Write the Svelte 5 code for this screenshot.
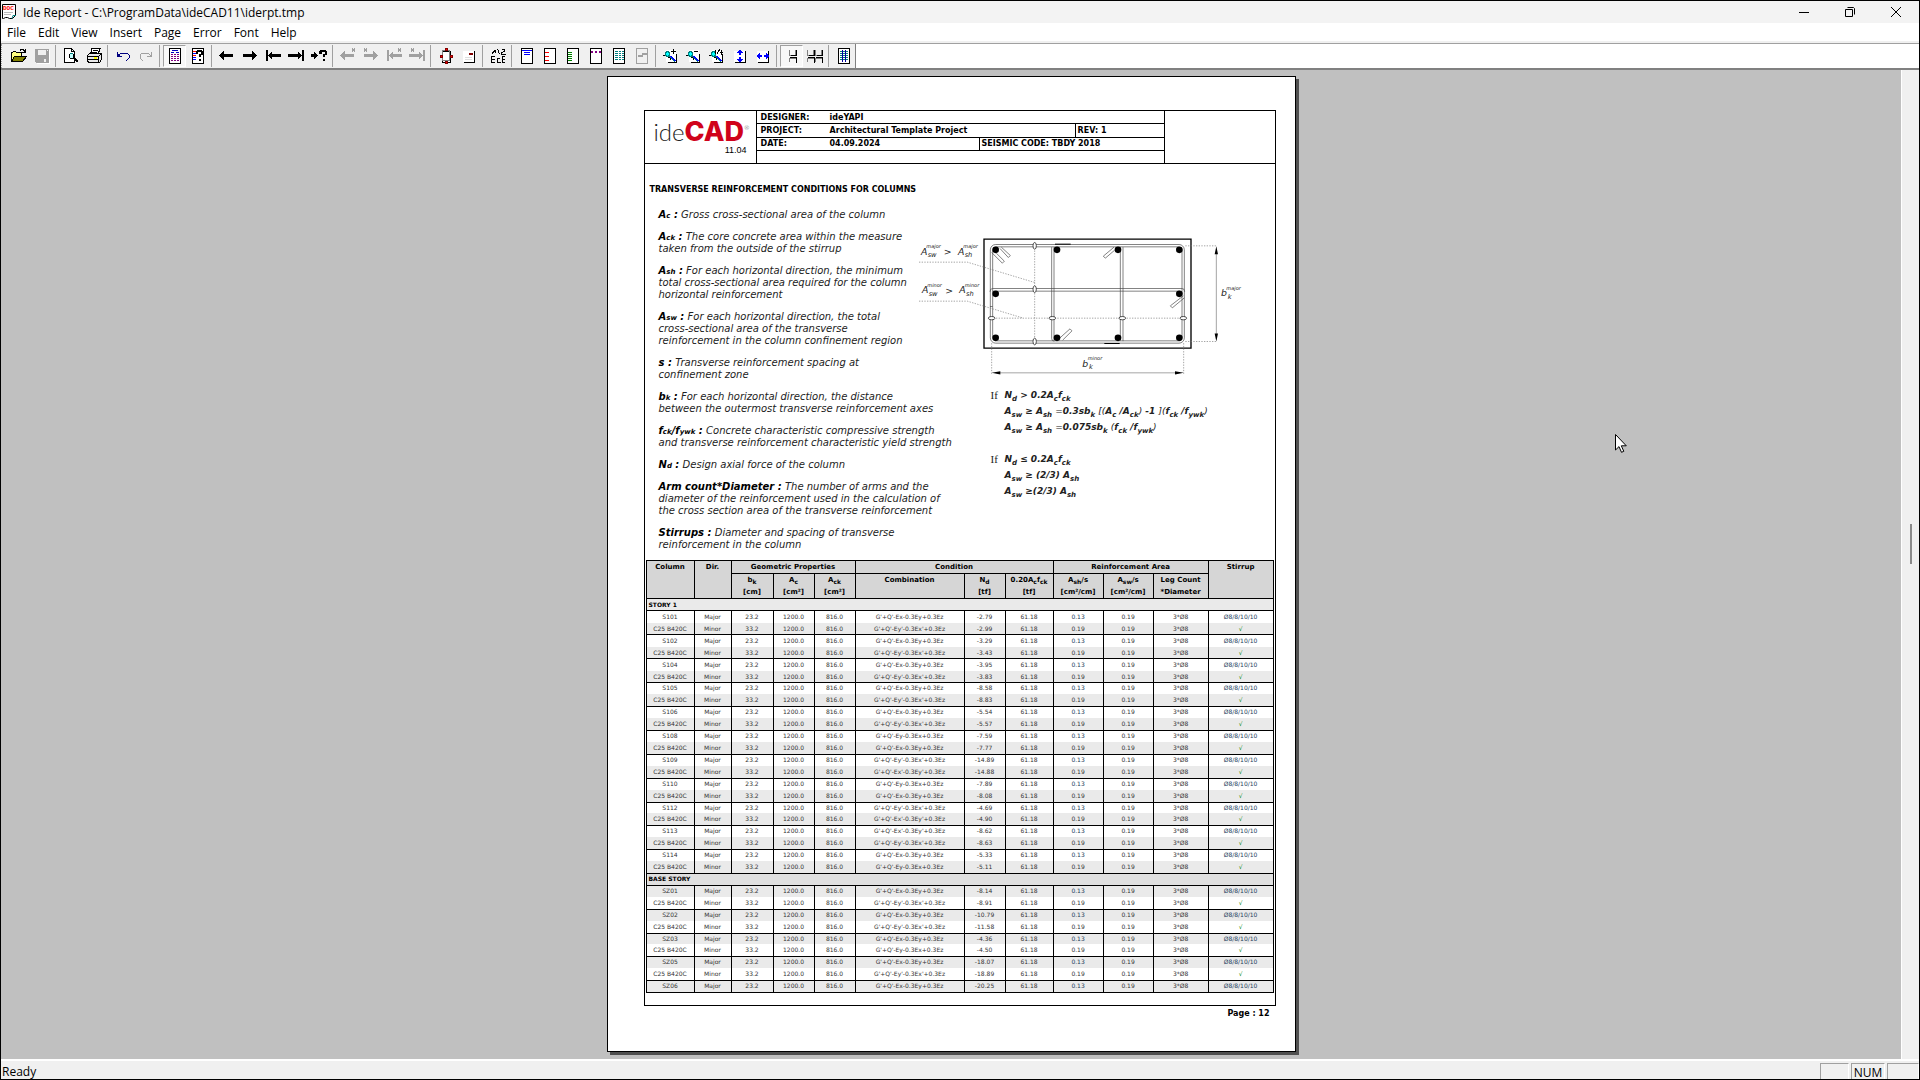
<script>
  const menus = ["File", "Edit", "View", "Insert", "Page", "Error", "Font", "Help"];

  // every icon is a list of [fill, stroke, path] on a 16 x 16 grid
  const pageShape = ["#fff", "#000", "M2.5.5h11v15h-11z"];
  const smallPage = ["#fff", "none", "M2 3h11v11H2z"];
  const smallEdge = ["none", "#000", "M13.5 3v11.5H3"];
  const lens = [
    ["#fff", "none", "M3 2h10v12H3z"],
    ["none", "#000", "M13.5 6v8.5H5"],
    ["#0ff", "#008080", "M2.5 4.5l2-1 2 1v3l-2 1-2-1z"],
    ["none", "#000", "M0 7.5h2M5 9.5h2v2"],
    ["none", "#008080", "M6.5 8.5l6 6"],
    ["none", "#00f", "M7.5 8.5l5 5M8.5 8.5l5 5"],
  ];
  const leftArrow = "M0 7.5L5 3v3h9v3H5v3z";
  const rightArrow = "M15 7.5L10 3v3H1v3h9v3z";
  const leftStop = "M1 2h2v11H1zM3 7.5L7 3v3h9v3H7v3z";
  const rightStop = "M14 2h2v11h-2zM14 7.5L10 3v3H0v3h10v3z";
  const cross = (x) => `M${x} .5l3 3M${x + 3} .5l-3 3`;
  const beam = (x) => [
    ["none", "#808080", `M${x + 0.5} 2v5h6v-5M${x + 0.5} 14v-4h6`],
    ["none", "#000", `M${x + 7.5} 2v5.5h-6M${x + 1} 9.5h6.5v5`],
  ];

  const icons = {
    open: [
      ["#ffff80", "#000", "M.5 13.5v-9h1l1-1h2l1 1h5v4"],
      ["#808000", "#000", "M.5 13.5l3-5h12l-4 5z"],
      ["none", "#000", "M9 2.5l1-1h2l2 2M14.5 1v3.5H11"],
    ],
    save: [
      ["#a0a0a0", "none", "M1 1h14v14H2l-1-1z"],
      ["#f0f0f0", "none", "M4 2h8v5H4zM10 11h2v3h-2zM13 2h1v1h-1z"],
      ["none", "#fff", "M15.5 2v13.5H3"],
    ],
    preview: [
      ["#fff", "#000", "M1.5.5h7l3 3v11h-10z"],
      ["none", "#000", "M8.5.5v3h3"],
      ["#c0ffff", "#000", "M6.5 6.5l1-1h2l1 1v3l-1 1h-2l-1-1z"],
      ["none", "#008080", "M7 5.500h3M11.500 10.500l3 3"],
      ["none", "#000", "M11 9.500l4 4M10.5 10l4 4"],
    ],
    print: [
      ["#fff", "#000", "M4.5 6.5l1.500-6h8l-2 6z"],
      ["none", "#000", "M7 2.500h5M6 4.500h5"],
      ["#e8e8e8", "#000", "M1.5 7.500l2-2h11l1 2v4l-2 3h-11l-1-2z"],
      ["none", "#000", "M1 8.500h11.500v5M12.500 8.500l3-3M2 11.500h10"],
      ["#ff0", "none", "M8 9h3v2H8z"],
    ],
    undo: [
      ["none", "#000080", "M2.5 4v4.500H7M3 8l3-3h6l2 2v3l-2 2h-1"],
      ["#000080", "none", "M2 5l4 4H2z"],
    ],
    redo: [
      ["none", "#a0a0a0", "M13.500 4v4.500H9M13 8l-3-3H4L2 7v3l2 2h1"],
      ["#a0a0a0", "none", "M14 5l-4 4h4z"],
    ],
    report: [
      pageShape,
      ["none", "#0000c0", "M5 2.500h6M4 4.500h3M9 4.500h3"],
      ["none", "#800080", "M4 6.500h2M7 6.500h2M10 6.500h2M4 8.500h2M7 8.500h2M10 8.500h2M4 10.500h2M7 10.500h2M10 10.500h2M4 12.500h2M7 12.500h2M10 12.500h2"],
    ],
    reportHelp: [
      pageShape,
      ["none", "#f00", "M3 3.500h3M3 7.500h3"],
      ["none", "#00f", "M3 5.500h3M3 9.500h3M3 11.500h3"],
      ["#000", "none", "M6 3h1V2h5v1h1v4h-2v2H9V6h2V4H8v2H6zM9 11h2v2H9z"],
    ],
    prev: [["#000", "none", leftArrow]],
    next: [["#000", "none", rightArrow]],
    first: [["#000", "none", leftStop]],
    last: [["#000", "none", rightStop]],
    goto: [
      ["#000", "none", "M0 6h3V4l4 3.500L3 11V9H0z"],
      ["#000", "none", "M8 3h1V2h6v1h1v4h-2v2h-2V6h2V4h-3v2H8zM12 11h2v2h-2z"],
    ],
    prevError: [["#a0a0a0", "none", leftArrow], ["none", "#a0a0a0", cross(12)]],
    nextError: [["#a0a0a0", "none", rightArrow], ["none", "#a0a0a0", cross(1)]],
    firstError: [["#a0a0a0", "none", leftStop], ["none", "#a0a0a0", cross(12)]],
    lastError: [["#a0a0a0", "none", rightStop], ["none", "#a0a0a0", cross(2)]],
    frame: [
      ["#fff", "#000", "M4.500 3.500h8v11h-8z"],
      ["none", "#808080", "M4.500 2.500h7v10h-7z"],
      ["#f00", "#800000", "M7 .5h2v2H7zM2.500 7h2v2h-2zM12.500 7h2v2h-2zM7 13h2v2H7z"],
    ],
    stamp: [smallPage, smallEdge, ["#800000", "none", "M8 5h4v2H8z"], ["none", "#ddd", "M4 9.500h7M4 11.500h7"]],
    label: [
      ["none", "#000", "M1.500 8v7M2 8.500h3M2 11.500h3M2 14.500h3M7.500 10v5M8 10.500h2M8 14.500h3M12.500 8v7M13 8.500h2M13 11.500h2M13 14.500h2"],
      ["none", "#000", "M2 5.500l3-3M5.500 2v3M7.500 1l2 5M11.500 1h3v2l-3 2v1h4"],
    ],
    header: [pageShape, ["none", "#00f", "M3 2.500h10M5 4.500h6M5 6.500h6"]],
    leftRed: [pageShape, ["none", "#f00", "M3 4.500h4M3 8.500h4M3 12.500h4"]],
    leftGreen: [pageShape, ["none", "#008000", "M3 4.500h4M3 6.500h4M3 8.500h4M3 10.500h4M3 12.500h4"]],
    dashed: [pageShape, ["#800080", "none", "M3 3h2v2H3zM7 3h2v2H7zM11 3h2v2h-2z"]],
    lines: [
      pageShape,
      ["none", "#008080", "M4 3.500h3M8 3.500h2M11 3.500h2M4 5.500h3M8 5.500h2M11 5.500h2M4 7.500h3M8 7.500h2M11 7.500h2M4 9.500h3M8 9.500h2M11 9.500h2M4 11.500h3M8 11.500h2M11 11.500h2"],
    ],
    broken: [["#f0f0f0", "#a0a0a0", "M2.500.5h11v15h-11z"], ["#a0a0a0", "none", "M4 7h4V5h5v2H9v2H4z"]],
    zoomIn: [...lens, ["none", "#000", "M8 3.500h5M10.500 1v5"]],
    zoomOut: [...lens, ["none", "#000", "M8 3.500h4"]],
    zoomReal: [...lens, ["none", "#000", "M6.500 2v4M8 6l3-5M12.500 2v5M11 4.500h3"]],
    fitHeight: [smallPage, smallEdge, ["#00f", "none", "M7 2h2v1h1v1h1v1H9v2H7V5H5V4h1V3h1zM7 9h2v2h2v1h-1v1H9v1H7v-1H6v-1H5v-1h2z"]],
    fitWidth: [smallPage, smallEdge, ["#00f", "none", "M2 7h1V6h1V5h1v2h2v2H5v2H4v-1H3V9H2zM14 7h-1V6h-1V5h-1v2H9v2h2v2h1v-1h1V9h1z"]],
    single: [...beam(5)],
    double: [...beam(0), ...beam(8)],
    grid: [
      pageShape,
      ["none", "#008080", "M4 3.500h8M4 5.500h8M4 7.500h8M4 9.500h8M4 11.500h8"],
      ["none", "#0000a0", "M6.500 2v12M9.500 2v12"],
    ],
  };

  const toolbar = [
    [["open", "Open"], ["save", "Save"]],
    [["preview", "Print preview"], ["print", "Print"]],
    [["undo", "Undo"], ["redo", "Redo"]],
    [["report", "Report"], ["reportHelp", "Report help"]],
    [["prev", "Previous page"], ["next", "Next page"], ["first", "First page"], ["last", "Last page"], ["goto", "Go to page"]],
    [["prevError", "Previous error"], ["nextError", "Next error"], ["firstError", "First error"], ["lastError", "Last error"]],
    [["frame", "Frame"], ["stamp", "Stamp"]],
    [["label", "Labels"]],
    [["header", "Header"], ["leftRed", "Chapters"], ["leftGreen", "Sections"], ["dashed", "Page break"], ["lines", "Body"], ["broken", "Line break"]],
    [["zoomIn", "Zoom in"], ["zoomOut", "Zoom out"], ["zoomReal", "Actual size"], ["fitHeight", "Fit height"], ["fitWidth", "Fit width"]],
    [["single", "Single page"], ["double", "Facing pages"]],
    [["grid", "Grid"]],
  ];
  const pressed = ["report", "single"];
  const disabled = ["save", "redo", "prevError", "nextError", "firstError", "lastError", "broken"];

  // [symbol parts (sub when odd), lines of text]
  const terms = [
    [["A", "c"], ["Gross cross-sectional area of the column"]],
    [["A", "ck"], ["The core concrete area within the measure", "taken from the outside of the stirrup"]],
    [["A", "sh"], ["For each horizontal direction, the minimum", "total cross-sectional area required for the column", "horizontal reinforcement"]],
    [["A", "sw"], ["For each horizontal direction, the total", "cross-sectional area of the transverse", "reinforcement in the column confinement region"]],
    [["s"], ["Transverse reinforcement spacing at", "confinement zone"]],
    [["b", "k"], ["For each horizontal direction, the distance", "between the outermost transverse reinforcement axes"]],
    [["f", "ck", "/f", "ywk"], ["Concrete characteristic compressive strength", "and transverse reinforcement characteristic yield strength"]],
    [["N", "d"], ["Design axial force of the column"]],
    [["Arm count*Diameter"], ["The number of arms and the", "diameter of the reinforcement used in the calculation of", "the cross section area of the transverse reinforcement"]],
    [["Stirrups"], ["Diameter and spacing of transverse", "reinforcement in the column"]],
  ];

  const X = "G'+Q'-Ex-0.3Ey+0.3Ez";
  const Y = "G'+Q'-Ey-0.3Ex+0.3Ez";
  const XP = "G'+Q'-Ex'-0.3Ey'+0.3Ez";
  const YP = "G'+Q'-Ey'-0.3Ex'+0.3Ez";

  // [column, major combination, major Nd, minor combination, minor Nd]
  const stories = [
    {
      name: "STORY 1",
      columns: [
        ["S101", X, "-2.79", YP, "-2.99"],
        ["S102", X, "-3.29", YP, "-3.43"],
        ["S104", X, "-3.95", YP, "-3.83"],
        ["S105", X, "-8.58", YP, "-8.83"],
        ["S106", X, "-5.54", YP, "-5.57"],
        ["S108", Y, "-7.59", X, "-7.77"],
        ["S109", YP, "-14.89", XP, "-14.88"],
        ["S110", Y, "-7.89", X, "-8.08"],
        ["S112", YP, "-4.69", XP, "-4.90"],
        ["S113", XP, "-8.62", YP, "-8.63"],
        ["S114", X, "-5.33", Y, "-5.11"],
      ],
    },
    {
      name: "BASE STORY",
      columns: [
        ["SZ01", X, "-8.14", YP, "-8.91"],
        ["SZ02", X, "-10.79", YP, "-11.58"],
        ["SZ03", X, "-4.36", Y, "-4.50"],
        ["SZ05", X, "-18.07", YP, "-18.89"],
        ["SZ06", X, "-20.25"],
      ],
    },
  ];

  const bars = [[287, 90], [471, 90], [654, 90], [838, 90], [287, 222], [838, 222], [287, 354], [471, 354], [654, 354], [838, 354]];
</script>

{#snippet parts(list)}{#each list as p, i}{#if i % 2}<sub>{p}</sub>{:else}{p}{/if}{/each}{/snippet}

{#snippet symbol(x, y, letter, low, high)}
  <text {x} {y} font-size="28">{letter}</text>
  <text x={x + 20} y={y + 8} font-size="20">{low}</text>
  <text x={x + 16} y={y - 20} font-size="15">{high}</text>
{/snippet}

<div class="window">
  <header class="titlebar">
    <svg class="doc" viewBox="0 0 16 16" aria-hidden="true">
      <path d="M.5.5h13v11l-3 3h-3l-2-1h-2l-2 1h-1z" fill="#fff" stroke="#000" />
      <path d="M10 14.500l1-3h3" fill="none" stroke="#008080" />
      <path d="M2 8.500h9M2 10.500h7" stroke="#bbb" />
      <text x="1" y="6" font-size="6" font-weight="bold" fill="#f00">DOC</text>
    </svg>
    <h1>Ide Report - C:\ProgramData\ideCAD11\iderpt.tmp</h1>
    <div class="controls">
      <button aria-label="Minimize"><svg viewBox="0 0 12 12"><path d="M1 6.500h10" /></svg></button>
      <button aria-label="Restore"><svg viewBox="0 0 12 12"><path d="M1.500 3.500h7v7h-7zM3.500 1.500h6l1 1v6" /></svg></button>
      <button aria-label="Close"><svg viewBox="0 0 12 12"><path d="M1 1l10 10M11 1L1 11" /></svg></button>
    </div>
  </header>

  <nav class="menubar">
    {#each menus as menu}<button>{menu}</button>{/each}
  </nav>

  <div class="toolstrip">
    <div class="toolbar">
      {#each toolbar as group}
        <div class="group">
          {#each group as [name, label]}
            <button aria-label={label} class:pressed={pressed.includes(name)} disabled={disabled.includes(name)}>
              <svg viewBox="0 0 16 16" shape-rendering="crispEdges">
                {#each icons[name] as [fill, stroke, d]}<path {fill} {stroke} {d} />{/each}
              </svg>
            </button>
          {/each}
        </div>
      {/each}
    </div>
  </div>

  <main class="workspace">
    <div class="canvas">
      <article class="sheet">
        <div class="frame">
          <div class="head">
            <div class="logo">
              <div class="brand"><span>ide</span><b>CAD</b><sup>®</sup></div>
              <div class="version">11.04</div>
            </div>
            <div class="info">
              <div class="row"><span class="key">DESIGNER:</span><span>ideYAPI</span></div>
              <div class="row"><span class="key">PROJECT:</span><span>Architectural Template Project</span><span class="rev">REV: 1</span></div>
              <div class="row"><span class="key">DATE:</span><span>04.09.2024</span><span class="code">SEISMIC CODE: TBDY 2018</span></div>
              <div class="row"></div>
            </div>
            <div class="blank"></div>
          </div>

          <h2>TRANSVERSE REINFORCEMENT CONDITIONS FOR COLUMNS</h2>

          <div class="conditions">
            <div class="terms">
              {#each terms as [sym, lines]}
                <p>
                  <b>{@render parts(sym)} :</b>
                  {#each lines as line, i}{#if i}<br />{/if}{line}{/each}
                </p>
              {/each}
            </div>

            <div class="figures">
              <svg class="diagram" viewBox="45 40 1020 440">
                <g fill="none" stroke="#000">
                  <path d="M252 58h621v327H252z" stroke-width="4" />
                  <g stroke="#444" stroke-width="2">
                    <rect x="271" y="74" width="582" height="296" rx="16" />
                    <rect x="278" y="81" width="568" height="282" rx="10" />
                    <path d="M278 206h568q8 0 8 10M278 214h560q8 0 8 8M278 206q-8 0-8 10" />
                    <path d="M455 82v274q0 8 8 8M462 82v280M661 82v280M669 82v282" />
                    <path d="M275 98l32 32 6-6-24-24M300 86l25 27 6-6-27-25M642 82l-32 27 6 6 28-24M850 228l-39 30 6 6 36-30M480 354l30-27 6 6-28 28" />
                    <path d="M270 260h8" />
                  </g>
                  <path d="M465 73h47M613 371h46" stroke-width="3" />
                  <g stroke="#777" stroke-width="2" stroke-dasharray="4 4">
                    <path d="M57 127h145l202 61M57 244h145l165 50M404 68v306M264 295h594" />
                    <path d="M856 78h92M856 365h92M275 370v94M851 370v94" />
                  </g>
                  <g fill="#fff" stroke-width="2">
                    <ellipse cx="404" cy="78" rx="5" ry="10" /><ellipse cx="404" cy="208" rx="5" ry="10" />
                    <ellipse cx="404" cy="365" rx="5" ry="10" /><ellipse cx="275" cy="295" rx="10" ry="5" />
                    <ellipse cx="457" cy="295" rx="10" ry="5" /><ellipse cx="667" cy="295" rx="10" ry="5" />
                    <ellipse cx="850" cy="295" rx="10" ry="5" />
                  </g>
                  <path d="M290 459h546M949 95v254" stroke="#777" stroke-width="2" />
                </g>
                <path d="M275 459l26-5v10zM851 459l-26-5v10zM949 79l-5 24h10zM949 365l-5-24h10z" />
                {#each bars as [cx, cy]}<circle {cx} {cy} r="10" />{/each}
                <g font-style="italic" fill="#222">
                  {@render symbol(63, 105, "A", "sw", "major")}
                  <text x="131" y="106" font-size="28">&gt;</text>
                  {@render symbol(174, 105, "A", "sh", "major")}
                  {@render symbol(66, 221, "A", "sw", "minor")}
                  <text x="136" y="222" font-size="28">&gt;</text>
                  {@render symbol(178, 221, "A", "sh", "minor")}
                  {@render symbol(547, 441, "b", "k", "minor")}
                  {@render symbol(963, 230, "b", "k", "major")}
                </g>
              </svg>

              <div class="formulas">
                <span class="if">If</span>
                <div>
                  <p>N<sub>d</sub> &gt; 0.2A<sub>c</sub>f<sub>ck</sub></p>
                  <p>A<sub>sw</sub> ≥ A<sub>sh</sub> <i>=</i>0.3sb<sub>k</sub> <i>[(</i>A<sub>c</sub> /A<sub>ck</sub><i>)</i> -1 <i>](</i>f<sub>ck</sub> /f<sub>ywk</sub><i>)</i></p>
                  <p>A<sub>sw</sub> ≥ A<sub>sh</sub> <i>=</i>0.075sb<sub>k</sub> <i>(</i>f<sub>ck</sub> /f<sub>ywk</sub><i>)</i></p>
                </div>
                <span class="if">If</span>
                <div>
                  <p>N<sub>d</sub> ≤ 0.2A<sub>c</sub>f<sub>ck</sub></p>
                  <p>A<sub>sw</sub> ≥ (2/3) A<sub>sh</sub></p>
                  <p>A<sub>sw</sub> ≥(2/3) A<sub>sh</sub></p>
                </div>
              </div>
            </div>
          </div>

          <table>
            <colgroup>
              {#each [48, 37, 42, 41, 41, 109, 41, 48, 50, 50, 55, 65] as w}<col style="width: {w}px" />{/each}
            </colgroup>
            <thead>
              <tr>
                <th rowspan="2">Column</th>
                <th rowspan="2">Dir.</th>
                <th colspan="3">Geometric Properties</th>
                <th colspan="3">Condition</th>
                <th colspan="3">Reinforcement Area</th>
                <th rowspan="2">Stirrup</th>
              </tr>
              <tr class="units">
                <th>b<sub>k</sub><br />[cm]</th>
                <th>A<sub>c</sub><br />[cm²]</th>
                <th>A<sub>ck</sub><br />[cm²]</th>
                <th>Combination</th>
                <th>N<sub>d</sub><br />[tf]</th>
                <th>0.20A<sub>c</sub>f<sub>ck</sub><br />[tf]</th>
                <th>A<sub>sh</sub>/s<br />[cm²/cm]</th>
                <th>A<sub>sw</sub>/s<br />[cm²/cm]</th>
                <th>Leg Count<br />*Diameter</th>
              </tr>
            </thead>
            <tbody>
              {#each stories as story}
                <tr class="story"><th colspan="12">{story.name}</th></tr>
                {#each story.columns as [name, majorComb, majorN, minorComb, minorN]}
                  <tr class="major">
                    <td>{name}</td><td>Major</td><td>23.2</td><td>1200.0</td><td>816.0</td>
                    <td>{majorComb}</td><td>{majorN}</td><td>61.18</td><td class="blue">0.13</td><td>0.19</td><td>3*Ø8</td><td class="blue">Ø8/8/10/10</td>
                  </tr>
                  {#if minorN}
                    <tr class="minor">
                      <td>C25 B420C</td><td>Minor</td><td>33.2</td><td>1200.0</td><td>816.0</td>
                      <td>{minorComb}</td><td>{minorN}</td><td>61.18</td><td>0.19</td><td>0.19</td><td>3*Ø8</td><td class="ok">√</td>
                    </tr>
                  {/if}
                {/each}
              {/each}
            </tbody>
          </table>
        </div>
        <footer>Page : 12</footer>
      </article>
    </div>
    <div class="scrollbar"><div class="thumb"></div></div>
  </main>

  <div class="statusbar">
    <span class="ready">Ready</span>
    <span class="pane"></span>
    <span class="pane num">NUM</span>
    <span class="pane last"></span>
  </div>

  <svg class="cursor" viewBox="0 0 12 19" aria-hidden="true">
    <path d="M.5.5v15.500l3.500-3.400 2.500 5.700 2.300-1-2.500-5.500h5z" fill="#fff" stroke="#000" />
  </svg>
</div>

<style>
  :global(body) {
    background: #000;
  }

  .window {
    position: relative;
    box-sizing: border-box;
    min-height: 100vh;
    display: flex;
    flex-direction: column;
    border: 1px solid #000;
    background: #f0f0f0;
    color: #000;
    font-family: "Open Sans", "Noto Sans", sans-serif;
    font-size: 12px;
  }

  button {
    border: 0;
    padding: 0;
    background: none;
    font: inherit;
    color: inherit;
  }

  .titlebar {
    display: flex;
    align-items: center;
    height: 22px;
    padding-left: 1px;
    background: #f3f3f3;
  }

  .doc {
    width: 16px;
    height: 16px;
    margin-right: 5px;
    font-family: "Liberation Mono", monospace;
  }

  h1 {
    margin: 0;
    font-size: 12px;
    font-weight: normal;
  }

  .controls {
    display: flex;
    margin-left: auto;
  }

  .controls button {
    width: 46px;
    height: 18px;
  }

  .controls svg {
    display: block;
    width: 12px;
    height: 12px;
    margin: 0 auto;
    fill: none;
    stroke: #000;
  }

  .menubar {
    display: flex;
    gap: 12px;
    height: 18px;
    padding-left: 6px;
    border-bottom: 2px solid #f0f0f0;
    background: #fff;
    line-height: 20px;
  }

  .toolstrip {
    border-top: 1px solid #a0a0a0;
    border-bottom: 2px solid #808080;
    background: #fff;
  }

  .toolbar {
    display: inline-flex;
    vertical-align: top;
    height: 24px;
    padding-left: 5px;
    border-left: 1px dotted #a0a0a0;
    border-right: 1px solid #808080;
    background: #f0f0f0;
  }

  .group {
    display: flex;
    align-items: center;
  }

  .group + .group {
    margin-left: 2px;
    padding-left: 3px;
    border-left: 1px solid #a0a0a0;
    height: 22px;
    align-self: center;
  }

  .group button {
    box-sizing: border-box;
    width: 23px;
    height: 22px;
    border: 1px solid transparent;
  }

  .group .pressed {
    border-color: #a0a0a0 #fff #fff #a0a0a0;
    background: #f8f8f8;
  }

  .group svg {
    display: block;
    width: 16px;
    height: 16px;
    margin: 0 auto;
  }

  .workspace {
    flex: 1;
    display: flex;
    background: #c0c0c0;
  }

  .canvas {
    flex: 1;
    padding: 6px 0;
  }

  .scrollbar {
    width: 17px;
    border-left: 1px solid #fff;
    background: #f0f0f0;
  }

  .thumb {
    width: 2px;
    height: 40px;
    margin: 454px 0 0 8px;
    background: #8a8a8a;
  }

  .sheet {
    box-sizing: border-box;
    width: 689px;
    margin: 0 auto;
    padding: 33px 19px 31px 36px;
    border: 1px solid #000;
    background: #fff;
    box-shadow: 3px 3px 0 #505050;
    font-family: "DejaVu Sans", sans-serif;
  }

  .frame {
    box-sizing: border-box;
    min-height: 896px;
    border: 1px solid #000;
  }

  .head {
    display: grid;
    grid-template-columns: 111px 1fr 110px;
    border-bottom: 1px solid #000;
    font-size: 8px;
    font-weight: bold;
  }

  .info {
    display: grid;
    grid-template-rows: 12px 14px 13px 13px;
    border: solid #000;
    border-width: 0 1px;
  }

  .row {
    display: flex;
    padding-left: 4px;
    line-height: 14px;
  }

  .row + .row {
    border-top: 1px solid #000;
  }

  .row + .row + .row {
    line-height: 12px;
  }

  .key {
    width: 69px;
  }

  .rev,
  .code {
    box-sizing: border-box;
    margin-left: auto;
    padding-left: 2px;
    border-left: 1px solid #000;
  }

  .rev {
    width: 89px;
  }

  .code {
    width: 185px;
  }

  .brand {
    display: flex;
    padding: 7px 0 0 9px;
    font-family: Lato, sans-serif;
    font-size: 24px;
    font-weight: 300;
    line-height: 28px;
    color: #222;
  }

  .brand b {
    font-family: Inter, sans-serif;
    font-size: 27px;
    font-weight: 800;
    color: #d0021b;
  }

  .brand sup {
    font-size: 6px;
    line-height: 20px;
  }

  .version {
    padding-right: 9px;
    text-align: right;
    font-family: "Liberation Sans", Arial, sans-serif;
    font-size: 9px;
    font-weight: normal;
    line-height: 8px;
  }

  h2 {
    margin: 20px 0 0 5px;
    font-size: 8px;
    line-height: 12px;
  }

  .conditions {
    display: grid;
    grid-template-columns: 260px 1fr;
    padding: 13px 0 0 14px;
  }

  .terms {
    font-size: 10px;
    font-style: italic;
    line-height: 12px;
    white-space: nowrap;
    color: #222;
  }

  .terms p {
    margin: 0;
  }

  .terms p + p {
    margin-top: 10px;
  }

  .terms b {
    color: #000;
  }

  sub {
    font-size: 7px;
    line-height: 0;
  }

  .terms sub {
    vertical-align: baseline;
  }

  .diagram {
    display: block;
    width: 340px;
    height: 147px;
    margin: 24px 0 0 -4px;
    font-family: "DejaVu Sans", sans-serif;
  }

  .formulas {
    display: grid;
    grid-template-columns: 14px 1fr;
    row-gap: 16px;
    padding: 7px 0 0 72px;
    font-size: 9px;
    font-style: italic;
    font-weight: bold;
    line-height: 16px;
    white-space: nowrap;
    color: #222;
  }

  .formulas p {
    margin: 0;
  }

  .formulas i {
    font-weight: normal;
  }

  .if {
    font: 11px/16px "Liberation Serif", serif;
  }

  table {
    width: 627px;
    margin: 9px 1px 0;
    table-layout: fixed;
    border-collapse: collapse;
    font-size: 6px;
    line-height: 10px;
    text-align: center;
    color: #333;
  }

  th,
  td {
    padding: 0;
    border: solid #000;
    border-width: 0 1px;
    white-space: nowrap;
  }

  thead th {
    border-width: 1px;
    background: #d6d6d6;
    color: #000;
    font-size: 7px;
    line-height: 12px;
    vertical-align: top;
  }

  thead sub {
    font-size: 6px;
  }

  tbody tr {
    height: 12px;
  }

  tbody tr:nth-child(11n + 7) {
    height: 11px;
  }

  tbody tr:nth-child(odd) {
    background: #eaeaea;
  }

  tbody .major td {
    border-top-width: 1px;
  }

  tbody .minor td {
    padding-top: 1px;
  }

  tbody tr:last-child td {
    border-bottom-width: 1px;
  }

  tbody .story {
    background: #e0e0e0;
  }

  .story th {
    border-width: 1px;
    padding-left: 2px;
    text-align: left;
    color: #000;
  }

  .blue {
    color: #24405c;
  }

  .ok {
    color: #008000;
  }

  footer {
    padding: 2px 6px 0 0;
    text-align: right;
    font-size: 8px;
    font-weight: bold;
    line-height: 12px;
  }

  .statusbar {
    display: flex;
    height: 16px;
    padding-top: 2px;
    border-top: 2px solid #fff;
    line-height: 17px;
  }

  .ready {
    flex: 1;
    padding-left: 1px;
  }

  .pane {
    box-sizing: border-box;
    width: 29px;
    margin-right: 2px;
    border: solid;
    border-width: 1px 1px 0;
    border-color: #a0a0a0 #fff #fff #a0a0a0;
  }

  .num {
    width: 34px;
    text-align: center;
  }

  .last {
    width: 32px;
    margin-right: 0;
  }

  .cursor {
    position: absolute;
    left: 1614px;
    top: 433px;
    width: 12px;
    height: 19px;
  }
</style>
